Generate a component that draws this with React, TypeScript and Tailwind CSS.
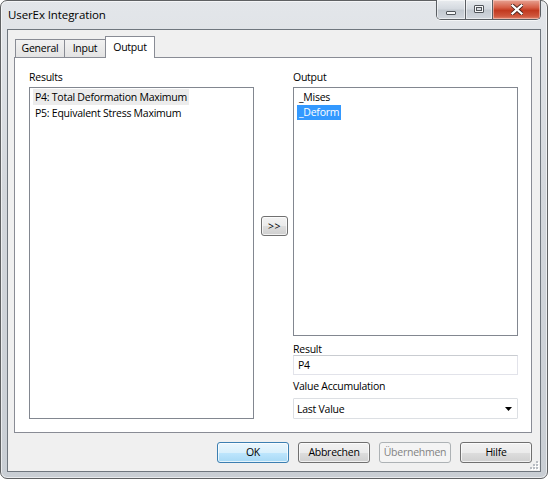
import React from "react";

const btnBase =
  "h-[21px] w-[72px] rounded-[3px] border text-[10.5px] leading-[17px] flex items-center justify-center shadow-[inset_0_0_0_1px_rgba(255,255,255,0.7)]";
const btnNormal =
  "border-[#707070] bg-[linear-gradient(to_bottom,#f2f2f2_0%,#ebebeb_50%,#dddddd_51%,#cfcfcf_100%)] text-black";
const btnDefault =
  "border-[#3c7fb1] bg-[linear-gradient(to_bottom,#eaf6fd_0%,#d9f0fc_50%,#bee6fd_51%,#a7d9f5_100%)] text-black";
const btnDisabled = "border-[#adb2b5] bg-[#f4f4f4] text-[#838383] shadow-none";

function CaptionButtons() {
  return (
    <div className="flex -mt-px h-[20px] rounded-b-[5px] border border-t-0 border-[#5a5e63] overflow-hidden shadow-[0_1px_0_rgba(255,255,255,0.6)]">
      {/* minimize */}
      <div className="w-[29px] h-full flex items-center justify-center border-r border-[#5a5e63] bg-[linear-gradient(to_bottom,#e9ecef_0%,#d5dae0_45%,#c3c9d0_55%,#d2d7dd_100%)] shadow-[inset_0_0_0_1px_rgba(255,255,255,0.55)]">
        <div className="mt-[6px] w-[10px] h-[4px] bg-[#f6f7f8] border border-[#51555a] rounded-[1px]" />
      </div>
      {/* maximize */}
      <div className="w-[27px] h-full flex items-center justify-center border-r border-[#5a5e63] bg-[linear-gradient(to_bottom,#e9ecef_0%,#d5dae0_45%,#c3c9d0_55%,#d2d7dd_100%)] shadow-[inset_0_0_0_1px_rgba(255,255,255,0.55)]">
        <div className="w-[10px] h-[8px] border border-[#51555a] bg-[#f6f7f8] p-[1px] rounded-[1px] -mt-[1px]">
          <div className="w-full h-full border border-[#51555a] bg-[#d9dde2]" />
        </div>
      </div>
      {/* close */}
      <div className="w-[47px] h-full flex items-center justify-center bg-[linear-gradient(to_bottom,#e7a393_0%,#d65e45_40%,#c2391f_55%,#cf563c_85%,#e08670_100%)] shadow-[inset_0_0_0_1px_rgba(255,220,210,0.5)]">
        <svg width="12" height="11" viewBox="0 0 12 11" className="-mt-[1px]">
          <path
            d="M1.5 1.5 L10.5 9.5 M10.5 1.5 L1.5 9.5"
            stroke="#4a231c"
            strokeWidth="4"
            strokeLinecap="square"
          />
          <path
            d="M1.5 1.5 L10.5 9.5 M10.5 1.5 L1.5 9.5"
            stroke="#ffffff"
            strokeWidth="2.2"
            strokeLinecap="square"
          />
        </svg>
      </div>
    </div>
  );
}

function ResizeGrip() {
  const dots = [
    [8, 0],
    [8, 3],
    [5, 3],
    [8, 6],
    [5, 6],
    [2, 6],
  ];
  return (
    <svg width="11" height="9" viewBox="0 0 11 9" className="absolute right-[1px] bottom-[1px]">
      {dots.map(([x, y], i) => (
        <g key={i}>
          <rect x={x + 1} y={y + 1} width="2" height="2" fill="#ffffff" />
          <rect x={x} y={y} width="2" height="2" fill="#b8bcc2" />
        </g>
      ))}
    </svg>
  );
}

export default function App() {
  return (
    <div className="w-[548px] h-[479px] bg-white font-['Open_Sans',sans-serif] text-[10.5px] tracking-[-0.25px] text-black">
      <div className="w-full h-full rounded-[7px] border border-[#5f6163] bg-[linear-gradient(to_bottom,#e3e6ea_0%,#d3d7dc_40%,#c9ced4_100%)] flex flex-col px-[6px] pb-[6px] shadow-[inset_0_0_0_1px_rgba(255,255,255,0.6)]">
        {/* title bar */}
        <div className="h-[28px] flex justify-between">
          <div className="pl-[1px] pt-[6px] text-[11.5px] tracking-[-0.1px] leading-[15px] text-black">UserEx Integration</div>
          <CaptionButtons />
        </div>

        {/* client area */}
        <div className="relative flex-1 flex flex-col border border-[#6f767e] bg-[#f0f0f0] pt-[6px] pl-[6px] pr-[8px]">
          {/* tabs */}
          <div className="flex h-[21px] pl-[1px] items-start">
            <div className="mt-[3px] h-[18px] w-[50px] border border-b-0 border-[#898c95] bg-[linear-gradient(to_bottom,#f2f2f2,#e3e3e3)] text-center leading-[16px]">
              General
            </div>
            <div className="mt-[3px] -ml-px h-[18px] w-[42px] border border-b-0 border-[#898c95] bg-[linear-gradient(to_bottom,#f2f2f2,#e3e3e3)] text-center leading-[16px]">
              Input
            </div>
            <div className="relative z-10 -ml-px h-[22px] w-[50px] border border-b-0 border-[#898c95] bg-white text-center pt-[2px] leading-[16px]">
              Output
            </div>
          </div>

          {/* panel */}
          <div className="h-[376px] border border-[#898c95] bg-white pt-[12px] pl-[14px] pr-[13px] pb-[13px] flex">
            {/* results column */}
            <div className="w-[225px] flex flex-col">
              <div className="h-[17px] leading-[15px]">Results</div>
              <div className="h-[332px] border border-[#828790] bg-white pt-[1px] pl-[3px]">
                <div className="flex flex-col items-start">
                  <span className="h-[16px] leading-[16px] px-[2px] bg-[#ececec]">P4: Total Deformation Maximum</span>
                  <span className="h-[16px] leading-[16px] px-[2px]">P5: Equivalent Stress Maximum</span>
                </div>
              </div>
            </div>

            {/* move button */}
            <div className="ml-[7px] mr-[5px] pt-[146px]">
              <div className={`${btnBase} ${btnNormal} !w-[27px] !h-[20px] tracking-[0.5px]`}>&gt;&gt;</div>
            </div>

            {/* output column */}
            <div className="w-[225px] flex flex-col">
              <div className="h-[17px] leading-[15px]">Output</div>
              <div className="h-[250px] border border-[#828790] bg-white pt-[1px] pl-[3px]">
                <div className="flex flex-col items-start">
                  <span className="h-[16px] leading-[16px] px-[2px]">_Mises</span>
                  <span className="h-[15px] leading-[15px] px-[2px] bg-[#3399ff] text-white">_Deform</span>
                </div>
              </div>
              <div className="mt-[4px] h-[15px] leading-[18px]">Result</div>
              <div className="h-[20px] border border-[#e2e3ea] border-t-[#c9ccd1] bg-white pl-[4px] leading-[18px]">
                P4
              </div>
              <div className="mt-[2px] h-[15px] leading-[19px]">Value Accumulation</div>
              <div className="mt-[6px] h-[21px] border border-[#dcdfe3] bg-white pl-[3px] pr-[5px] flex items-center justify-between rounded-[1px]">
                <span className="leading-[18px]">Last Value</span>
                <svg width="7" height="4" viewBox="0 0 7 4">
                  <path d="M0 0 H7 L3.5 4 Z" fill="#000" />
                </svg>
              </div>
            </div>
          </div>

          {/* dialog buttons */}
          <div className="mt-[9px] flex justify-end gap-[9px]">
            <div className={`${btnBase} ${btnDefault}`}>OK</div>
            <div className={`${btnBase} ${btnNormal}`}>Abbrechen</div>
            <div className={`${btnBase} ${btnDisabled}`}>Übernehmen</div>
            <div className={`${btnBase} ${btnNormal}`}>Hilfe</div>
          </div>

          <ResizeGrip />
        </div>
      </div>
    </div>
  );
}
